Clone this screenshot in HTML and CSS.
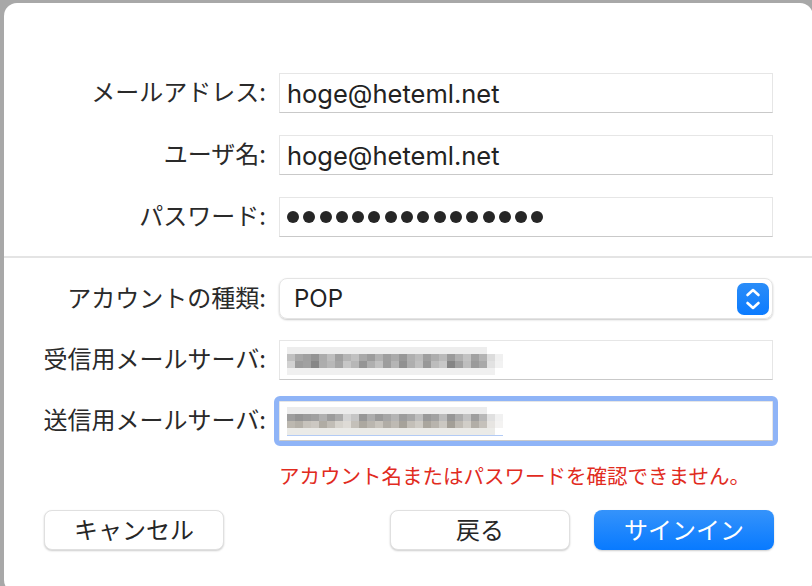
FILE: index.html
```html
<!DOCTYPE html>
<html lang="ja">
<head>
  <meta charset="UTF-8">
  <title>アカウント設定</title>
  <link rel="stylesheet" href="styles.css">
</head>
<body>

<div class="dialog">
  <!-- Account -->
  <div class="form-grid top">
    <div class="label">メールアドレス:</div>
    <div class="field">hoge@heteml.net</div>

    <div class="label">ユーザ名:</div>
    <div class="field">hoge@heteml.net</div>

    <div class="label">パスワード:</div>
    <div class="field dots">
      <span></span><span></span><span></span><span></span><span></span><span></span><span></span><span></span>
      <span></span><span></span><span></span><span></span><span></span><span></span><span></span><span></span>
    </div>
  </div>

  <div class="separator"></div>

  <!-- Servers -->
  <div class="form-grid bottom">
    <div class="label">アカウントの種類:</div>
    <div class="popup">
      <span>POP</span>
      <span class="stepper">
        <svg width="32" height="32" viewBox="0 0 32 32">
          <path d="M10.5 12 L16 7 L21.5 12" fill="none" stroke="#fff" stroke-width="2.6" stroke-linecap="round" stroke-linejoin="round"/>
          <path d="M10.5 20 L16 25 L21.5 20" fill="none" stroke="#fff" stroke-width="2.6" stroke-linecap="round" stroke-linejoin="round"/>
        </svg>
      </span>
    </div>

    <div class="label">受信用メールサーバ:</div>
    <div class="field">
      <svg class="mosaic" width="224" height="28" viewBox="0 0 28 4" preserveAspectRatio="none" shape-rendering="crispEdges">
        <rect x="0" y="0" width="25" height="1" fill="#ededed"/>
        <rect x="0" y="3" width="26" height="1" fill="#f0f0f0"/>
        <rect x="0" y="1" width="1" height="1" fill="#c0c0c0"/><rect x="1" y="1" width="1" height="1" fill="#a8a8a8"/><rect x="2" y="1" width="1" height="1" fill="#a0a0a0"/><rect x="3" y="1" width="1" height="1" fill="#949494"/><rect x="4" y="1" width="1" height="1" fill="#acacac"/><rect x="5" y="1" width="1" height="1" fill="#bebebe"/><rect x="6" y="1" width="1" height="1" fill="#a0a0a0"/><rect x="7" y="1" width="1" height="1" fill="#b5b5b5"/><rect x="8" y="1" width="1" height="1" fill="#c1c1c1"/><rect x="9" y="1" width="1" height="1" fill="#a8a8a8"/><rect x="10" y="1" width="1" height="1" fill="#9c9c9c"/><rect x="11" y="1" width="1" height="1" fill="#b2b2b2"/><rect x="12" y="1" width="1" height="1" fill="#9e9e9e"/><rect x="13" y="1" width="1" height="1" fill="#aaaaaa"/><rect x="14" y="1" width="1" height="1" fill="#989898"/><rect x="15" y="1" width="1" height="1" fill="#b0b0b0"/><rect x="16" y="1" width="1" height="1" fill="#bcbcbc"/><rect x="17" y="1" width="1" height="1" fill="#9f9f9f"/><rect x="18" y="1" width="1" height="1" fill="#adadad"/><rect x="19" y="1" width="1" height="1" fill="#bababa"/><rect x="20" y="1" width="1" height="1" fill="#9b9b9b"/><rect x="21" y="1" width="1" height="1" fill="#b1b1b1"/><rect x="22" y="1" width="1" height="1" fill="#c3c3c3"/><rect x="23" y="1" width="1" height="1" fill="#a1a1a1"/><rect x="24" y="1" width="1" height="1" fill="#b4b4b4"/><rect x="25" y="1" width="1" height="1" fill="#dcdcdc"/><rect x="26" y="1" width="1" height="1" fill="#f0f0f0"/>
        <rect x="0" y="2" width="1" height="1" fill="#d2d2d2"/><rect x="1" y="2" width="1" height="1" fill="#9c9c9c"/><rect x="2" y="2" width="1" height="1" fill="#a1a1a1"/><rect x="3" y="2" width="1" height="1" fill="#878787"/><rect x="4" y="2" width="1" height="1" fill="#adadad"/><rect x="5" y="2" width="1" height="1" fill="#b8b8b8"/><rect x="6" y="2" width="1" height="1" fill="#a5a5a5"/><rect x="7" y="2" width="1" height="1" fill="#c7c7c7"/><rect x="8" y="2" width="1" height="1" fill="#b7b7b7"/><rect x="9" y="2" width="1" height="1" fill="#959595"/><rect x="10" y="2" width="1" height="1" fill="#afafaf"/><rect x="11" y="2" width="1" height="1" fill="#c1c1c1"/><rect x="12" y="2" width="1" height="1" fill="#9d9d9d"/><rect x="13" y="2" width="1" height="1" fill="#b5b5b5"/><rect x="14" y="2" width="1" height="1" fill="#919191"/><rect x="15" y="2" width="1" height="1" fill="#aeaeae"/><rect x="16" y="2" width="1" height="1" fill="#c0c0c0"/><rect x="17" y="2" width="1" height="1" fill="#989898"/><rect x="18" y="2" width="1" height="1" fill="#bcbcbc"/><rect x="19" y="2" width="1" height="1" fill="#c7c7c7"/><rect x="20" y="2" width="1" height="1" fill="#858585"/><rect x="21" y="2" width="1" height="1" fill="#a0a0a0"/><rect x="22" y="2" width="1" height="1" fill="#bebebe"/><rect x="23" y="2" width="1" height="1" fill="#9b9b9b"/><rect x="24" y="2" width="1" height="1" fill="#a9a9a9"/><rect x="25" y="2" width="1" height="1" fill="#e2e2e2"/><rect x="26" y="2" width="1" height="1" fill="#f2f2f2"/>
      </svg>
    </div>

    <div class="label">送信用メールサーバ:</div>
    <div class="field focused">
      <svg class="mosaic underline" width="216" height="28" viewBox="0 0 27 4" preserveAspectRatio="none" shape-rendering="crispEdges">
        <rect x="0" y="0" width="25" height="1" fill="#ececec"/>
        <rect x="0" y="3" width="26" height="1" fill="#ebebe8"/>
        <rect x="0" y="1" width="1" height="1" fill="#9e9e9e"/><rect x="1" y="1" width="1" height="1" fill="#949494"/><rect x="2" y="1" width="1" height="1" fill="#9b9b9b"/><rect x="3" y="1" width="1" height="1" fill="#a0a0a0"/><rect x="4" y="1" width="1" height="1" fill="#b0b0b0"/><rect x="5" y="1" width="1" height="1" fill="#9c9c9c"/><rect x="6" y="1" width="1" height="1" fill="#ababab"/><rect x="7" y="1" width="1" height="1" fill="#d4d4d4"/><rect x="8" y="1" width="1" height="1" fill="#c5c5c5"/><rect x="9" y="1" width="1" height="1" fill="#979797"/><rect x="10" y="1" width="1" height="1" fill="#adadad"/><rect x="11" y="1" width="1" height="1" fill="#9a9a9a"/><rect x="12" y="1" width="1" height="1" fill="#a6a6a6"/><rect x="13" y="1" width="1" height="1" fill="#b4b4b4"/><rect x="14" y="1" width="1" height="1" fill="#9d9d9d"/><rect x="15" y="1" width="1" height="1" fill="#a8a8a8"/><rect x="16" y="1" width="1" height="1" fill="#bebebe"/><rect x="17" y="1" width="1" height="1" fill="#999999"/><rect x="18" y="1" width="1" height="1" fill="#a2a2a2"/><rect x="19" y="1" width="1" height="1" fill="#bbbbbb"/><rect x="20" y="1" width="1" height="1" fill="#969696"/><rect x="21" y="1" width="1" height="1" fill="#acacac"/><rect x="22" y="1" width="1" height="1" fill="#c2c2c2"/><rect x="23" y="1" width="1" height="1" fill="#9e9e9e"/><rect x="24" y="1" width="1" height="1" fill="#b8b8b8"/><rect x="25" y="1" width="1" height="1" fill="#e0e0e0"/><rect x="26" y="1" width="1" height="1" fill="#f1f1f1"/>
        <rect x="0" y="2" width="1" height="1" fill="#bcb8b0"/><rect x="1" y="2" width="1" height="1" fill="#b4b0a8"/><rect x="2" y="2" width="1" height="1" fill="#c7c3bc"/><rect x="3" y="2" width="1" height="1" fill="#ccc8c2"/><rect x="4" y="2" width="1" height="1" fill="#b0aca4"/><rect x="5" y="2" width="1" height="1" fill="#c1bdb6"/><rect x="6" y="2" width="1" height="1" fill="#d6d3cd"/><rect x="7" y="2" width="1" height="1" fill="#dedbd6"/><rect x="8" y="2" width="1" height="1" fill="#c4c0b9"/><rect x="9" y="2" width="1" height="1" fill="#aca8a0"/><rect x="10" y="2" width="1" height="1" fill="#bab6af"/><rect x="11" y="2" width="1" height="1" fill="#c8c4bd"/><rect x="12" y="2" width="1" height="1" fill="#b1ada6"/><rect x="13" y="2" width="1" height="1" fill="#bebab3"/><rect x="14" y="2" width="1" height="1" fill="#a6a29a"/><rect x="15" y="2" width="1" height="1" fill="#c3bfb8"/><rect x="16" y="2" width="1" height="1" fill="#cecbc5"/><rect x="17" y="2" width="1" height="1" fill="#aaa69e"/><rect x="18" y="2" width="1" height="1" fill="#b8b4ad"/><rect x="19" y="2" width="1" height="1" fill="#cbc8c2"/><rect x="20" y="2" width="1" height="1" fill="#a39f97"/><rect x="21" y="2" width="1" height="1" fill="#bfbbb4"/><rect x="22" y="2" width="1" height="1" fill="#d1cec8"/><rect x="23" y="2" width="1" height="1" fill="#b2aea7"/><rect x="24" y="2" width="1" height="1" fill="#c5c1bb"/><rect x="25" y="2" width="1" height="1" fill="#e7e5e2"/><rect x="26" y="2" width="1" height="1" fill="#f4f3f2"/>
      </svg>
    </div>

    <div class="label"></div>
    <div class="error">アカウント名またはパスワードを確認できません。</div>
  </div>

  <div class="buttons">
    <button class="btn">キャンセル</button>
    <div class="btn-group">
      <button class="btn">戻る</button>
      <button class="btn primary">サインイン</button>
    </div>
  </div>
</div>

</body>
</html>
```

FILE: styles.css
```css
body {
  margin: 0;
  background-color: #a8a8a8;
  font-family: 'Inter', 'Noto Sans CJK JP', sans-serif;
  color: #262626;
  overflow: hidden;
  height: 586px;
}

.dialog {
  margin: 3px 0 0 4px;
  width: 809px;
  height: 590px;
  background-color: #fff;
  border-radius: 13px;
}

.form-grid {
  display: grid;
  grid-template-columns: 262px 494px;
  column-gap: 13px;
  align-items: center;
}

.form-grid.top {
  padding-top: 70px;
  grid-auto-rows: 40px;
  row-gap: 22px;
}

.form-grid.bottom {
  padding-top: 20px;
  grid-template-rows: 41px 40px 40px auto;
  row-gap: 21px;
}

.label {
  text-align: right;
  font-family: 'Noto Sans CJK JP', sans-serif;
  font-size: 24px;
  line-height: 30px;
  padding-bottom: 4px;
  color: #2a2a2a;
  white-space: nowrap;
}

.field {
  position: relative;
  box-sizing: border-box;
  height: 40px;
  display: flex;
  align-items: center;
  padding-left: 7px;
  border: 1px solid #e6e6e6;
  border-bottom-color: #c9c9c9;
  font-size: 25.5px;
  color: #222;
}

.field.dots {
  gap: 4.3px;
}

.field.dots span {
  width: 12px;
  height: 12px;
  border-radius: 50%;
  background-color: #262626;
}

.field.focused::after {
  content: '';
  position: absolute;
  inset: -6px;
  border: 5px solid #8fb4f7;
  border-radius: 6px;
}

.mosaic {
  display: block;
  margin-top: 1px;
}

.mosaic.underline {
  border-bottom: 1px solid #b3cbf5;
}

.separator {
  margin-top: 19px;
  height: 2px;
  background-color: #e4e4e4;
}

.popup {
  box-sizing: border-box;
  height: 41px;
  display: flex;
  align-items: center;
  justify-content: space-between;
  padding: 0 3px 0 14px;
  border-radius: 8px;
  border: 1px solid #e4e4e4;
  box-shadow: 0 1px 2px rgba(0, 0, 0, 0.22);
  font-size: 24px;
  color: #222;
}

.stepper {
  width: 32px;
  height: 32px;
  border-radius: 7px;
  background: linear-gradient(#2b8df8, #0b7bff);
}

.stepper svg {
  display: block;
}

.error {
  margin-top: 1px;
  font-family: 'Noto Sans CJK JP', sans-serif;
  font-size: 20.5px;
  line-height: 24px;
  color: #e12b1e;
}

.buttons {
  display: flex;
  justify-content: space-between;
  padding: 23px 39px 0 40px;
}

.btn-group {
  display: flex;
  gap: 24px;
}

.btn {
  width: 180px;
  height: 40px;
  border: 1px solid #e0e0e0;
  border-radius: 8px;
  background-color: #fff;
  box-shadow: 0 1px 2px rgba(0, 0, 0, 0.2);
  font-family: 'Noto Sans CJK JP', sans-serif;
  font-size: 24px;
  color: #262626;
  padding: 0 0 3px;
}

.btn.primary {
  border: none;
  background: linear-gradient(#3593fb, #087aff);
  color: #fff;
}
```
